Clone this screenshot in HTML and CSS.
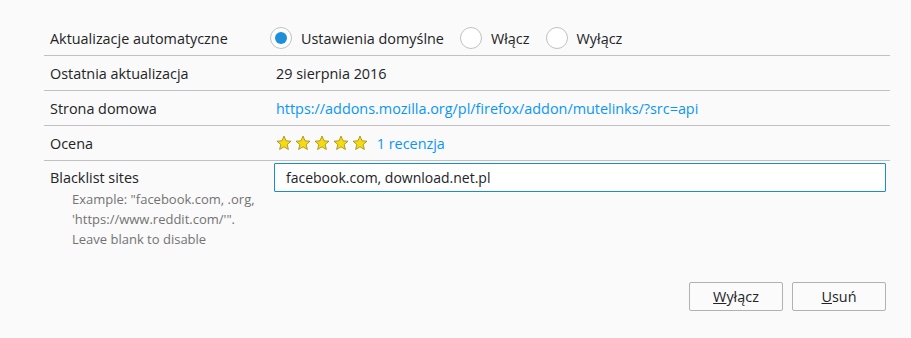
FILE: index.html
```html
<!DOCTYPE html>
<html lang="pl">
<head>
  <meta charset="UTF-8" />
  <title>Mute Links</title>
  <link rel="stylesheet" href="styles.css">
</head>
<body>
  <div class="details">
    <div class="row">
      <div class="label">Aktualizacje automatyczne</div>
      <div class="value radios">
        <label class="radio"><span class="dot checked"></span>Ustawienia domyślne</label>
        <label class="radio"><span class="dot"></span>Włącz</label>
        <label class="radio"><span class="dot"></span>Wyłącz</label>
      </div>
    </div>
    <div class="row">
      <div class="label">Ostatnia aktualizacja</div>
      <div class="value">29 sierpnia 2016</div>
    </div>
    <div class="row">
      <div class="label">Strona domowa</div>
      <div class="value"><a href="#">https://addons.mozilla.org/pl/firefox/addon/mutelinks/?src=api</a></div>
    </div>
    <div class="row">
      <div class="label">Ocena</div>
      <div class="value">
        <span class="stars">
          <svg class="star" viewBox="0 0 16 16"><path d="M8 1 L10 5.8 L15 6.2 L11.2 9.5 L12.4 14.5 L8 11.8 L3.6 14.5 L4.8 9.5 L1 6.2 L6 5.8 Z"/></svg>
          <svg class="star" viewBox="0 0 16 16"><path d="M8 1 L10 5.8 L15 6.2 L11.2 9.5 L12.4 14.5 L8 11.8 L3.6 14.5 L4.8 9.5 L1 6.2 L6 5.8 Z"/></svg>
          <svg class="star" viewBox="0 0 16 16"><path d="M8 1 L10 5.8 L15 6.2 L11.2 9.5 L12.4 14.5 L8 11.8 L3.6 14.5 L4.8 9.5 L1 6.2 L6 5.8 Z"/></svg>
          <svg class="star" viewBox="0 0 16 16"><path d="M8 1 L10 5.8 L15 6.2 L11.2 9.5 L12.4 14.5 L8 11.8 L3.6 14.5 L4.8 9.5 L1 6.2 L6 5.8 Z"/></svg>
          <svg class="star" viewBox="0 0 16 16"><path d="M8 1 L10 5.8 L15 6.2 L11.2 9.5 L12.4 14.5 L8 11.8 L3.6 14.5 L4.8 9.5 L1 6.2 L6 5.8 Z"/></svg>
        </span>
        <a href="#">1 recenzja</a>
      </div>
    </div>
    <div class="setting">
      <div class="setting-text">
        <div class="setting-title">Blacklist sites</div>
        <div class="setting-desc">Example: "facebook.com, .org, 'https://www.reddit.com/'". Leave blank to disable</div>
      </div>
      <input class="text-input" type="text" value="facebook.com, download.net.pl">
    </div>
  </div>
  <div class="actions">
    <button class="btn"><u>W</u>yłącz</button>
    <button class="btn"><u>U</u>suń</button>
  </div>
</body>
</html>
```

FILE: styles.css
```css
body {
  margin: 0;
  background-color: #FAFAFA;
  color: #222426;
  font-family: 'Open Sans', 'Noto Sans', sans-serif;
  font-size: 14.4px;
}
a {
  color: #0996F8;
  text-decoration: none;
}
.details {
  margin: 21px 21px 0 44px;
}
.row {
  display: grid;
  grid-template-columns: 226px 1fr;
  align-items: center;
  height: 34px;
  border-bottom: 1px solid #C1C1C1;
}
.label {
  padding-left: 6px;
}
.radios {
  display: flex;
  gap: 16px;
}
.radio {
  display: flex;
  align-items: center;
  gap: 9px;
}
.dot {
  width: 20px;
  height: 20px;
  border: 1px solid #C1C1C1;
  border-radius: 50%;
  background-color: #FFFFFF;
  position: relative;
}
.dot.checked::after {
  content: '';
  position: absolute;
  left: 4px;
  top: 4px;
  width: 12px;
  height: 12px;
  border-radius: 50%;
  background-color: #1F8FDA;
}
.row .value {
  padding-left: 6px;
}
.row .radios {
  padding-left: 0;
}
.stars {
  display: inline-flex;
  gap: 3px;
  vertical-align: -2px;
  margin-right: 5px;
}
.star {
  width: 16px;
  height: 16px;
  fill: #F6DA12;
  stroke: #9C8A14;
  stroke-width: 0.8;
  stroke-linejoin: round;
}
.setting {
  display: grid;
  grid-template-columns: 230px 1fr;
  padding-top: 2px;
}
.setting-title {
  padding: 5px 0 0 6px;
  line-height: 20px;
}
.setting-desc {
  padding: 1px 10px 0 28px;
  font-size: 13px;
  line-height: 20px;
  color: #737373;
}
.text-input {
  height: 29px;
  box-sizing: border-box;
  margin-right: 4px;
  padding: 0 11px;
  border: 1px solid #1A8BD6;
  border-radius: 1px;
  font-family: inherit;
  font-size: 14px;
  color: #222426;
  background-color: #FFFFFF;
}
.actions {
  display: flex;
  justify-content: flex-end;
  gap: 9px;
  margin: 33px 25px 0 0;
}
.btn {
  width: 94px;
  height: 29px;
  background-color: #FBFBFB;
  border: 1px solid #B1B1B1;
  border-radius: 2px;
  font-family: inherit;
  font-size: 14.4px;
  color: #222426;
}
```
